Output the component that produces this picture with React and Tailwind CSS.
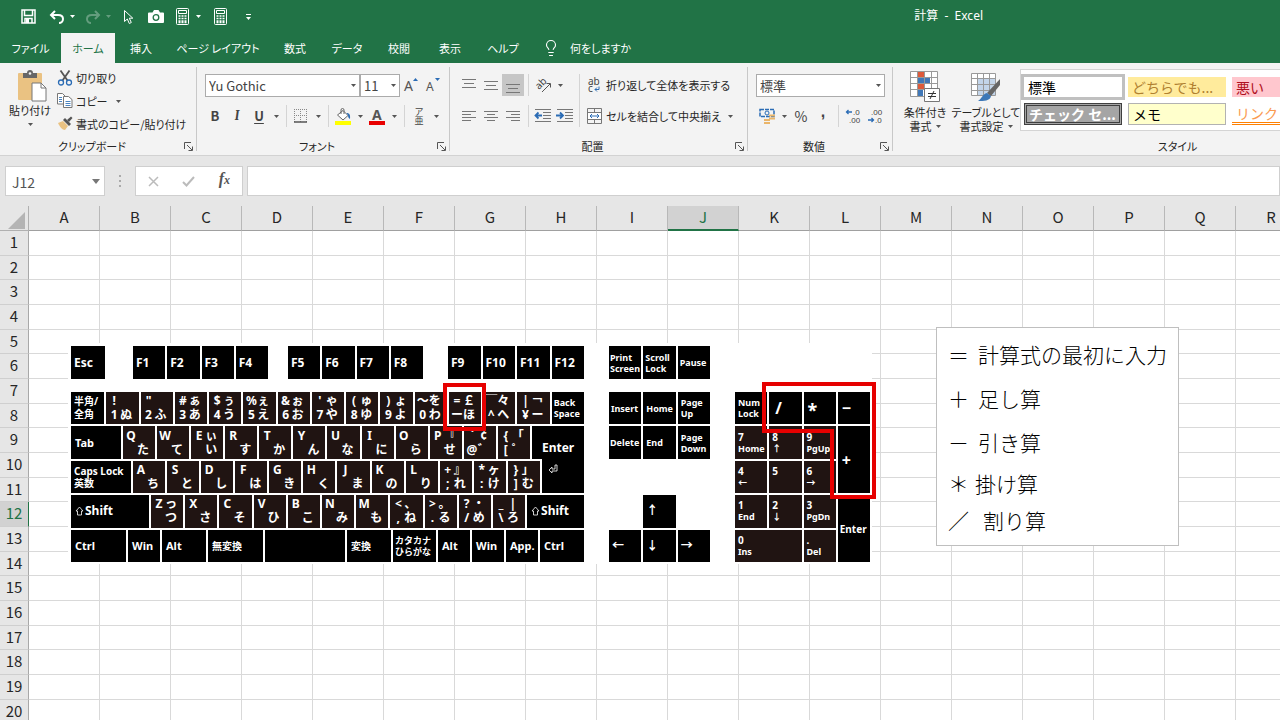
import { Lightbulb } from 'lucide-react'

const columns = 'ABCDEFGHIJKLMNOPQR'.split('')
const rows = Array.from({ length: 20 }, (_, i) => i + 1)

const tabs = [
  { name: 'ファイル', width: 'w-[61px]' },
  { name: 'ホーム', width: 'w-[54px]', active: true },
  { name: '挿入', width: 'w-[52px]' },
  { name: 'ページ レイアウト', width: 'w-[102px]' },
  { name: '数式', width: 'w-[52px]' },
  { name: 'データ', width: 'w-[52px]' },
  { name: '校閲', width: 'w-[52px]' },
  { name: '表示', width: 'w-[50px]' },
  { name: 'ヘルプ', width: 'w-[56px]' },
]

// each key: top left, top right, bottom left, bottom right
const numberKeys = [
  ['!', '', '1', 'ぬ'], ['"', '', '2', 'ふ'], ['#', 'ぁ', '3', 'あ'], ['$', 'ぅ', '4', 'う'],
  ['%', 'ぇ', '5', 'え'], ['&', 'ぉ', '6', 'お'], ["'", 'ゃ', '7', 'や'], ['(', 'ゅ', '8', 'ゆ'],
  [')', 'ょ', '9', 'よ'], ['～', 'を', '0', 'わ'], ['=', '￡', 'ー', 'ほ'], ['￣', '々', '^', 'へ'],
  ['|', '￢', '¥', 'ー'],
]
const topKeys = [
  ['Q', '', '', 'た'], ['W', '', '', 'て'], ['E', 'ぃ', '', 'い'], ['R', '', '', 'す'],
  ['T', '', '', 'か'], ['Y', '', '', 'ん'], ['U', '', '', 'な'], ['I', '', '', 'に'],
  ['O', '', '', 'ら'], ['P', '『', '', 'せ'], ['`', '¢', '@', '゛'], ['{', '「', '[', '゜'],
]
const homeKeys = [
  ['A', '', '', 'ち'], ['S', '', '', 'と'], ['D', '', '', 'し'], ['F', '', '', 'は'],
  ['G', '', '', 'き'], ['H', '', '', 'く'], ['J', '', '', 'ま'], ['K', '', '', 'の'],
  ['L', '', '', 'り'], ['+', '』', ';', 'れ'], ['*', 'ヶ', ':', 'け'], ['}', '」', ']', 'む'],
]
const bottomKeys = [
  ['Z', 'っ', '', 'つ'], ['X', '', '', 'さ'], ['C', '', '', 'そ'], ['V', '', '', 'ひ'],
  ['B', '', '', 'こ'], ['N', '', '', 'み'], ['M', '', '', 'も'], ['<', '、', ',', 'ね'],
  ['>', '。', '.', 'る'], ['?', '・', '/', 'め'], ['_', '|', '\\', 'ろ'],
]

const notes = [
  { sign: '＝', text: '計算式の最初に入力', row: 'h-11', width: 'w-[30px]' },
  { sign: '＋', text: '足し算', row: 'h-11', width: 'w-[30px]' },
  { sign: '－', text: '引き算', row: 'h-11', width: 'w-[30px]' },
  { sign: '＊', text: '掛け算', row: 'h-[38px]', width: 'w-[27px]' },
  { sign: '／', text: '割り算', row: 'h-9', width: 'w-[35px]' },
]

function Caret({ className = 'text-[#555]' }) {
  return (
    <svg width="5" height="3" viewBox="0 0 5 3" className={className}>
      <path d="M0 0h5L2.5 3z" fill="currentColor" />
    </svg>
  )
}

function CaretButton({ label }) {
  return (
    <button aria-label={label} className="flex h-[22px] w-3 shrink-0 items-center justify-center">
      <Caret />
    </button>
  )
}

function Tool({ label, active, children }) {
  return (
    <button
      aria-label={label}
      className={`flex h-[22px] w-[22px] shrink-0 items-center justify-center ${active ? 'bg-[#c6c6c6]' : ''}`}
    >
      {children}
    </button>
  )
}

function Separator() {
  return (
    <div className="flex h-[22px] w-2 shrink-0 justify-center">
      <div className="w-px bg-[#d4d4d4]" />
    </div>
  )
}

function Group({ title, width, launcher = true, children }) {
  return (
    <section className={`flex h-[92px] shrink-0 ${width}`}>
      <div className="flex min-w-0 flex-1 flex-col pt-1 pb-px">
        <div className="h-[71px]">{children}</div>
        <div className="flex h-4 items-center">
          <h2 className="flex-1 text-center text-[11px] leading-4">{title}</h2>
          {launcher && (
            <button aria-label={title} className="mr-[3px] w-[9px]">
              <svg width="9" height="9" viewBox="0 0 9 9" fill="none" stroke="#555">
                <path d="M.5 7V.5H7M3 3l5 5M8.500 4.500v4h-4" />
              </svg>
            </button>
          )}
        </div>
      </div>
      <div className="my-1 w-px bg-[#c8c8c8]" />
    </section>
  )
}

function Combo({ label, value, width }) {
  return (
    <div className={`relative h-[23px] ${width}`}>
      <select
        aria-label={label}
        className="block h-full w-full appearance-none border border-[#ababab] bg-white pl-[3px] text-[13px] leading-5 text-[#444]"
      >
        <option>{value}</option>
      </select>
      <div className="pointer-events-none absolute inset-y-0 right-1 flex items-center">
        <Caret />
      </div>
    </div>
  )
}

function Lines({ shape }) {
  const paths = {
    top: 'M1 2.500h14M3 6.500h10M1 10.500h14',
    middle: 'M1 4.500h14M3 8.500h10M1 12.500h14',
    bottom: 'M1 7.500h14M3 11.500h10M1 15.500h14',
    left: 'M1 3.500h14M1 6.500h9M1 9.500h14M1 12.500h9',
    center: 'M1 3.500h14M4 6.500h8M1 9.500h14M4 12.500h8',
    right: 'M1 3.500h14M6 6.500h9M1 9.500h14M6 12.500h9',
  }
  return (
    <svg width="16" height="17" viewBox="0 0 16 17" stroke="#777">
      <path d={paths[shape]} />
    </svg>
  )
}

function Indent({ right }) {
  return (
    <svg width="18" height="16" viewBox="0 0 18 16" fill="none" stroke="#777">
      <path d="M1 1.500h16M9 4.500h8M9 7.500h8M9 10.500h8M1 13.500h16" />
      <path d={right ? 'M0 7.500h6M4 4.500l3 3-3 3' : 'M2 7.500h6M4.500 4.500l-3 3 3 3'} stroke="#2b6cb5" strokeWidth="1.800" />
    </svg>
  )
}

function Decimals({ increase }) {
  return (
    <svg width="16" height="16" viewBox="0 0 16 16" fill="#444" className="overflow-visible">
      <text x={increase ? 8 : 4} y="7" fontSize="8" fontFamily="Liberation Sans">{increase ? '.0' : '.00'}</text>
      <text x={increase ? 4 : 8} y="15" fontSize="8" fontFamily="Liberation Sans">{increase ? '.00' : '.0'}</text>
      <path
        d={increase ? 'M7 4H1.500M3.500 2l-2 2 2 2' : 'M1 12h5.500M4.500 10l2 2-2 2'}
        fill="none"
        stroke="#2b6cb5"
        strokeWidth="1.300"
      />
    </svg>
  )
}

function Calculator() {
  return (
    <svg width="13" height="17" viewBox="0 0 13 17" fill="none" stroke="#fff">
      <rect x=".5" y=".5" width="12" height="16" rx="1" />
      <path d="M2.500 2.500h8v3h-8z" />
      <path d="M2.500 8h8M2.500 10.500h8M2.500 13h8M2.500 14.500h8" strokeWidth="1.500" strokeDasharray="2 1" />
    </svg>
  )
}

function TitleBar() {
  return (
    <header className="flex h-[33px] shrink-0 items-center text-white">
      <div className="flex items-center pl-5">
        <button aria-label="上書き保存" className="flex w-4 justify-center">
          <svg width="15" height="15" viewBox="0 0 15 15" fill="none" stroke="#fff" strokeWidth="1.500">
            <path d="M1 1h13v13H1zM3.500 1v5.500h8V1M4 14V9.500h7V14" />
            <path d="M5 10h3v4H5z" fill="#fff" stroke="none" />
          </svg>
        </button>
        <button aria-label="元に戻す" className="ml-3 flex w-[18px] justify-center">
          <svg width="16" height="14" viewBox="0 0 16 14" fill="none" stroke="#fff" strokeWidth="2">
            <path d="M6 1L2 5l4 4M2 5h7c3 0 5 1.500 5 4s-2 4-4 4" />
          </svg>
        </button>
        <button aria-label="元に戻す一覧" className="flex w-3 justify-center"><Caret className="text-white" /></button>
        <button aria-label="やり直し" className="ml-[6px] flex w-[18px] justify-center opacity-30">
          <svg width="16" height="14" viewBox="0 0 16 14" fill="none" stroke="#fff" strokeWidth="2">
            <path d="M10 1l4 4-4 4M14 5H7C4 5 2 6.500 2 9s2 4 4 4" />
          </svg>
        </button>
        <button aria-label="やり直し一覧" className="flex w-3 justify-center opacity-30"><Caret className="text-white" /></button>
        <button aria-label="オブジェクトの選択" className="ml-1 flex w-5 justify-center">
          <svg width="11" height="16" viewBox="0 0 11 16" fill="none" stroke="#fff">
            <path d="M1.500 1.500v11l2.800-2.500 2 4.500 2-1-2-4.300h3.500z" />
          </svg>
        </button>
        <button aria-label="カメラ" className="ml-2 flex w-5 justify-center">
          <svg width="16" height="13" viewBox="0 0 16 13">
            <path d="M1 2.500h3.500L6 0h4.500L12 2.500h3a1 1 0 0 1 1 1V12a1 1 0 0 1-1 1H1a1 1 0 0 1-1-1V3.500a1 1 0 0 1 1-1z" fill="#fff" />
            <circle cx="8" cy="7.500" r="2.800" fill="none" stroke="#217346" strokeWidth="1.300" />
          </svg>
        </button>
        <button aria-label="電卓" className="ml-[6px] flex w-5 justify-center"><Calculator /></button>
        <button aria-label="電卓一覧" className="flex w-3 justify-center"><Caret className="text-white" /></button>
        <button aria-label="計算" className="ml-[6px] flex w-5 justify-center"><Calculator /></button>
        <button aria-label="クイック アクセスのカスタマイズ" className="ml-[10px] flex w-4 flex-col items-center gap-[2px]">
          <span className="h-px w-[5px] bg-white" />
          <Caret className="text-white" />
        </button>
      </div>
      <h1 className="ml-auto whitespace-pre pr-[297px] pb-[2px] font-['Noto_Sans','Noto_Sans_CJK_JP',sans-serif] text-xs leading-4">計算  -  Excel</h1>
    </header>
  )
}

function Tabs() {
  return (
    <nav className="flex h-[30px] shrink-0 items-stretch text-[11px] text-white">
      {tabs.map(tab => (
        <button
          key={tab.name}
          className={`shrink-0 whitespace-nowrap ${tab.width} ${tab.active ? 'bg-[#f3f3f3] text-[#217346]' : ''}`}
        >
          {tab.name}
        </button>
      ))}
      <button className="flex shrink-0 items-center gap-[10px] pl-[11px] whitespace-nowrap">
        <Lightbulb size={18} strokeWidth={1.5} />
        何をしますか
      </button>
    </nav>
  )
}

function ClipboardGroup() {
  return (
    <Group title="クリップボード" width="w-[197px]">
      <div className="flex pt-[3px]">
        <button className="flex w-[60px] shrink-0 flex-col items-center text-[11px] leading-4 whitespace-nowrap">
          <svg width="30" height="32" viewBox="0 0 30 32" className="ml-1">
            <rect x="1" y="3" width="24" height="27" rx="1" fill="#eac282" />
            <path d="M6 3h4a3 3 0 0 1 6 0h4v5H6z" fill="#666" />
            <circle cx="13" cy="3.500" r="1.300" fill="#f3f3f3" />
            <path d="M15 13h9l5 5v13H15z" fill="#fff" stroke="#777" />
            <path d="M24 13v5h5" fill="none" stroke="#777" />
          </svg>
          貼り付け
          <span className="flex h-3 items-center"><Caret /></span>
        </button>
        <div className="-ml-[3px] flex flex-col text-[11px] whitespace-nowrap">
          <button className="flex h-[23px] items-start gap-[3px] leading-4">
            <svg width="16" height="16" viewBox="0 0 16 16" fill="none">
              <path d="M3.500.5l7 10M12.500.5l-7 10" stroke="#555" strokeWidth="1.800" />
              <circle cx="4" cy="12.500" r="2.500" stroke="#2b6cb5" strokeWidth="1.300" />
              <circle cx="12" cy="12.500" r="2.500" stroke="#2b6cb5" strokeWidth="1.300" />
            </svg>
            切り取り
          </button>
          <div className="flex h-[23px] items-start gap-[5px]">
            <button className="flex items-start gap-[3px] leading-4">
              <svg width="16" height="15" viewBox="0 0 16 15" fill="#fff" stroke="#777">
                <path d="M.5.5h5l2.500 2.500v8H.5z" />
                <path d="M6.500 3.500h5l3.500 3v8H6.500z" />
                <path d="M2 4.500h3M2 6.500h3M2 8.500h3M8.500 8.500h5M8.500 10.500h5M8.500 12.500h5" stroke="#4a84c0" />
              </svg>
              コピー
            </button>
            <button aria-label="コピー一覧" className="flex h-4 w-3 items-center justify-center"><Caret /></button>
          </div>
          <button className="flex h-[23px] items-start gap-[3px] leading-4">
            <svg width="16" height="15" viewBox="0 0 16 15">
              <path d="M1 7l5-2 5 5-3 4c-3 0-5-3-7-7z" fill="#eac282" />
              <path d="M6 4l2-2 6 6-2 2z" fill="#555" />
              <path d="M10 4l4-3.500L15.500 2 12 6z" fill="#555" />
            </svg>
            書式のコピー/貼り付け
          </button>
        </div>
      </div>
    </Group>
  )
}

function FontGroup() {
  return (
    <Group title="フォント" width="w-[253px]">
      <div className="flex flex-col gap-2 pl-2 pt-[7px]">
        <div className="flex">
          <Combo label="フォント名" value="Yu Gothic" width="w-[155px]" />
          <Combo label="フォント サイズ" value="11" width="w-10" />
          <Tool label="フォント サイズの拡大">
            <svg width="16" height="18" viewBox="0 0 16 18" fill="#555">
              <text x="1" y="15" fontSize="14" fontFamily="Noto Sans">A</text>
              <path d="M10 5l2.500-3L15 5z" fill="#2b6cb5" />
            </svg>
          </Tool>
          <Tool label="フォント サイズの縮小">
            <svg width="16" height="18" viewBox="0 0 16 18" fill="#555">
              <text x="1" y="15" fontSize="12" fontFamily="Noto Sans">A</text>
              <path d="M10 2l2.500 3L15 2z" fill="#2b6cb5" />
            </svg>
          </Tool>
        </div>
        <div className="-ml-px flex text-[13px] leading-4 text-[#444]">
          <Tool label="太字"><b>B</b></Tool>
          <Tool label="斜体"><i className="font-serif font-bold">I</i></Tool>
          <Tool label="下線"><b className="underline underline-offset-2">U</b></Tool>
          <CaretButton label="下線の種類" />
          <Separator />
          <Tool label="罫線">
            <svg width="14" height="14" viewBox="0 0 14 14" fill="none" stroke="#888">
              <path d="M.5 0v13M6.500 0v13M12.500 0v13M0 .5h13M0 6.500h13" strokeDasharray="1 1" />
              <path d="M0 13h13" stroke="#555" strokeWidth="1.500" />
            </svg>
          </Tool>
          <CaretButton label="罫線の種類" />
          <Separator />
          <Tool label="塗りつぶしの色">
            <svg width="17" height="17" viewBox="0 0 17 17" fill="none">
              <path d="M2.500 7L8 2.500l5 5L8 12z" fill="#fff" stroke="#666" />
              <path d="M6 6V2a1.500 1.500 0 0 1 3 0v4" stroke="#666" />
              <path d="M11.500 5c3 0 4 2 3.500 6-1.500-1-2-2-2-4z" fill="#2b6cb5" />
              <path d="M0 13h16v4H0z" fill="#ff0" />
            </svg>
          </Tool>
          <CaretButton label="塗りつぶしの色一覧" />
          <Tool label="フォントの色">
            <svg width="17" height="17" viewBox="0 0 17 17" className="overflow-visible">
              <text x="3" y="12" fontSize="14" fontWeight="bold" fill="#555" fontFamily="Noto Sans">A</text>
              <path d="M0 13h16v4H0z" fill="#e80000" />
            </svg>
          </Tool>
          <CaretButton label="フォントの色一覧" />
          <Separator />
          <Tool label="ふりがな">
            <span className="flex flex-col items-center text-[9px] leading-[9px]">
              <span>ア</span>
              <span>亜</span>
            </span>
          </Tool>
          <CaretButton label="ふりがなの設定" />
        </div>
      </div>
    </Group>
  )
}

function AlignmentGroup() {
  return (
    <Group title="配置" width="w-[298px]">
      <div className="flex pl-2 pt-[7px]">
        <div className="flex flex-col gap-[9px]">
          <div className="flex">
            <Tool label="上揃え"><Lines shape="top" /></Tool>
            <Tool label="上下中央揃え"><Lines shape="middle" /></Tool>
            <Tool label="下揃え" active><Lines shape="bottom" /></Tool>
            <Separator />
            <Tool label="方向">
              <svg width="18" height="17" viewBox="0 0 18 17" fill="none" stroke="#555" className="overflow-visible">
                <text fontSize="10" fill="#444" stroke="none" transform="translate(5 13) rotate(-45)" fontFamily="Noto Sans">ab</text>
                <path d="M8 15l8-8M12.500 6.500h4v4" />
              </svg>
            </Tool>
            <CaretButton label="方向一覧" />
          </div>
          <div className="flex">
            <Tool label="左揃え"><Lines shape="left" /></Tool>
            <Tool label="中央揃え"><Lines shape="center" /></Tool>
            <Tool label="右揃え"><Lines shape="right" /></Tool>
            <Separator />
            <Tool label="インデントを減らす"><Indent /></Tool>
            <Tool label="インデントを増やす"><Indent right /></Tool>
          </div>
        </div>
        <div className="ml-[3px] w-px bg-[#d4d4d4]" />
        <div className="flex flex-col gap-[9px] pl-[7px] text-[11px] leading-4 whitespace-nowrap">
          <button className="flex h-[22px] items-center gap-1">
            <svg width="15" height="16" viewBox="0 0 15 16" fill="none" className="overflow-visible">
              <text x="1" y="8" fontSize="10" fill="#444" fontFamily="Noto Sans">ab</text>
              <text x="1" y="15" fontSize="10" fill="#444" fontFamily="Noto Sans">c</text>
              <path d="M12 9.500v3H8M10 10.500l-2 2 2 2" stroke="#2b6cb5" />
            </svg>
            折り返して全体を表示する
          </button>
          <div className="flex items-center gap-1">
            <button className="flex h-[22px] items-center gap-1">
              <svg width="15" height="16" viewBox="0 0 15 16" fill="none" stroke="#777">
                <path d="M.5.5h14v15H.5zM.5 4.500h14M.5 11.500h14M7.500.5v4M7.500 11.500v4" />
                <path d="M1 5h13v6H1z" fill="#fff" stroke="none" />
                <path d="M3 8h9M5 6L3 8l2 2M10 6l2 2-2 2" stroke="#2b6cb5" />
              </svg>
              セルを結合して中央揃え
            </button>
            <CaretButton label="セルの結合一覧" />
          </div>
        </div>
      </div>
    </Group>
  )
}

function NumberGroup() {
  return (
    <Group title="数値" width="w-[145px]">
      <div className="flex flex-col gap-2 pl-2 pt-[7px]">
        <Combo label="表示形式" value="標準" width="w-[129px]" />
        <div className="flex text-[#444]">
          <Tool label="通貨表示形式">
            <svg width="17" height="16" viewBox="0 0 17 16" fill="none">
              <path d="M1 1.500h14v7H1z" stroke="#2b6cb5" strokeDasharray="4 1" strokeWidth="1.500" />
              <circle cx="8" cy="5" r="2" stroke="#2b6cb5" />
              <path d="M10 7.500h6M10 10.500h6M5 12h6M5 15h6" stroke="#eab56a" strokeWidth="2" />
            </svg>
          </Tool>
          <CaretButton label="通貨一覧" />
          <Tool label="パーセント スタイル"><span className="text-sm leading-4">%</span></Tool>
          <Tool label="桁区切りスタイル"><b className="pb-2 font-['Liberation_Sans',sans-serif] text-base leading-4">,</b></Tool>
          <Separator />
          <Tool label="小数点以下の表示桁数を増やす"><Decimals increase /></Tool>
          <Tool label="小数点以下の表示桁数を減らす"><Decimals /></Tool>
        </div>
      </div>
    </Group>
  )
}

function StyleGroup() {
  return (
    <Group title="スタイル" width="w-[570px]" launcher={false}>
      <div className="flex pl-1 text-[11px] whitespace-nowrap">
        <button className="flex w-14 flex-col items-center pt-1 leading-[14px]">
          <svg width="30" height="32" viewBox="0 0 30 32" fill="none" stroke="#999">
            <path d="M.5.500h27v25H.5z" fill="#fff" />
            <path d="M8 1h7v5H8zM8 13h7v6H8z" fill="#dd5a3a" stroke="none" />
            <path d="M8 7h12v5H8zM8 19h5v6H8z" fill="#4078b8" stroke="none" />
            <path d="M.5 6.500h27M.5 12.500h27M.5 18.500h27M7.500.5v25M14.500.5v25M21.500.5v25" />
            <path d="M14.500 17.500h15v13h-15z" fill="#fff" stroke="#777" />
            <path d="M18 22.500h8M18 25.500h8M24 20l-4 8" stroke="#333" />
          </svg>
          <span className="pt-[2px]">条件付き</span>
          <span className="flex items-center gap-1">書式 <Caret /></span>
        </button>
        <button className="flex w-[66px] flex-col items-center pt-1 leading-[14px]">
          <svg width="30" height="32" viewBox="0 0 30 32" fill="none" stroke="#999">
            <path d="M.5 2.500h24v22H.5z" fill="#fff" />
            <path d="M7 8h17v16H7z" fill="#c3d5ea" stroke="none" />
            <path d="M.5 7.500h24M.5 13.500h24M.5 19.500h24M6.500 2.500v22M12.500 2.500v22M18.500 2.500v22" />
            <path d="M29 8v6l-9 11-4-3z" fill="#666" stroke="none" />
            <path d="M16 22l4 3c-1 5-7 5-13 5 4-2 4-7 9-8z" fill="#3c78b8" stroke="none" />
          </svg>
          <span className="pt-[2px]">テーブルとして</span>
          <span className="flex items-center gap-1">書式設定 <Caret /></span>
        </button>
        <div className="mt-[2px] ml-px grid h-[62px] grid-cols-[98px_98px_98px_98px] content-start gap-[6px] border border-[#d4d4d4] bg-white pt-[7px] pr-1 pl-[3px] text-sm [font-feature-settings:normal]">
          <button className="h-5 bg-white pl-1 text-left leading-4 text-black outline-3 outline-[#c0c0c0]">標準</button>
          <button className="h-5 bg-[#ffeb9c] pl-1 text-left leading-4 text-[#b08030]">どちらでも...</button>
          <button className="h-5 bg-[#ffc7ce] pl-1 text-left leading-4 text-[#b01020]">悪い</button>
          <button className="h-5 bg-[#c6efce] pl-1 text-left leading-4 text-[#006100]">良い</button>
          <button className="h-[22px] border-3 border-double border-[#3f3f3f] bg-[#a5a5a5] pl-[2px] text-left leading-4 font-bold text-white">チェック セ...</button>
          <button className="h-[22px] border border-[#b2b2b2] bg-[#ffffcc] pl-1 text-left leading-4 text-black">メモ</button>
          <button className="h-[22px] border-b-3 border-double border-[#ff8001] pl-1 text-left leading-4 text-[#fa9a50]">リンク セル</button>
        </div>
      </div>
    </Group>
  )
}

function FormulaBar() {
  return (
    <div className="flex shrink-0 bg-[#e6e6e6] pt-[10px] pb-[10px] pl-[5px]">
      <div className="relative h-[30px] w-[100px]">
        <input
          aria-label="名前ボックス"
          defaultValue="J12"
          className="block h-full w-full border border-[#cfcfcf] bg-white pt-[2px] pl-[6px] text-sm leading-5 text-[#555]"
        />
        <button aria-label="名前一覧" className="absolute inset-y-0 right-[5px] flex items-center">
          <svg width="8" height="5" viewBox="0 0 8 5"><path d="M0 0h8L4 5z" fill="#777" /></svg>
        </button>
      </div>
      <div className="flex w-[30px] flex-col items-center justify-center gap-[3px]">
        <span className="h-[2px] w-[2px] bg-[#aaa]" />
        <span className="h-[2px] w-[2px] bg-[#aaa]" />
        <span className="h-[2px] w-[2px] bg-[#aaa]" />
      </div>
      <div className="flex h-[30px] w-[108px] items-center border border-[#cfcfcf] bg-white">
        <button aria-label="キャンセル" className="flex flex-1 justify-center">
          <svg width="11" height="11" viewBox="0 0 11 11" stroke="#bbb" strokeWidth="1.500"><path d="M1 1l9 9M10 1l-9 9" /></svg>
        </button>
        <button aria-label="入力" className="flex flex-1 justify-center">
          <svg width="13" height="11" viewBox="0 0 13 11" fill="none" stroke="#bbb" strokeWidth="2"><path d="M1 6l3.500 3.500L12 1" /></svg>
        </button>
        <button aria-label="関数の挿入" className="flex-1 pb-1 font-['Liberation_Serif',serif] text-base leading-5 font-bold text-[#555] italic">
          f<span className="text-xs">x</span>
        </button>
      </div>
      <input aria-label="数式バー" className="ml-1 h-[30px] min-w-0 flex-1 border border-[#cfcfcf] bg-white px-2 text-sm" />
    </div>
  )
}

function Grid() {
  return (
    <table className="w-[1307px] table-fixed border-separate border-spacing-0 text-[15px] leading-5 text-[#262626]">
      <thead>
        <tr className="h-[25px]">
          <th aria-label="すべて選択" className="w-[29px] border-r border-b border-[#b0b0b0] bg-[#e6e6e6] p-0">
            <svg width="17" height="17" viewBox="0 0 17 17" className="mt-1 ml-2"><path d="M17 0v17H0z" fill="#b4b4b4" /></svg>
          </th>
          {columns.map(col => (
            <th
              key={col}
              className={`w-[71px] border-r p-0 pb-[2px] font-normal ${
                col === 'J'
                  ? 'border-b-2 border-[#b8b8b8] border-b-[#217346] bg-[#d2d2d2] text-[#217346]'
                  : 'border-b border-[#b8b8b8] border-b-[#a0a0a0] bg-[#e6e6e6]'
              }`}
            >
              {col}
            </th>
          ))}
        </tr>
      </thead>
      <tbody>
        {rows.map(row => (
          <tr key={row} className={row % 3 === 2 ? 'h-6' : 'h-[25px]'}>
            <th
              className={`border-r border-b border-b-[#cfcfcf] p-0 pb-[2px] font-normal ${
                row === 12 ? 'border-r-[#217346] bg-[#d2d2d2] text-[#217346]' : 'border-r-[#a8a8a8] bg-[#e6e6e6]'
              }`}
            >
              {row}
            </th>
            {columns.map(col => (
              <td key={col} className="border-r border-b border-[#d9d9d9] bg-white p-0" />
            ))}
          </tr>
        ))}
      </tbody>
    </table>
  )
}

function Key({ className = 'pl-1', size = 'text-xs leading-[14px]', children }) {
  return (
    <div className={`flex min-w-0 flex-col justify-center bg-black whitespace-nowrap ${size} ${className}`}>
      {children}
    </div>
  )
}

function KanaKey({ chars }) {
  return (
    <div className="grid min-w-0 flex-1 grid-cols-[12px_12px] content-center bg-[#201412] pl-[2px] text-xs leading-[14px]">
      {chars.map((char, i) => (
        <span key={i} className="flex h-[14px] justify-center">{char}</span>
      ))}
    </div>
  )
}

function PadKey({ top, bottom, className = '' }) {
  return (
    <div className={`flex min-w-0 flex-col justify-center bg-[#201412] pl-[3px] text-[9px] leading-[11px] whitespace-nowrap ${className}`}>
      <span className="text-[10px]">{top}</span>
      <span className="h-[11px]">{bottom}</span>
    </div>
  )
}

function FunctionKeys({ names, width, className = '' }) {
  return (
    <div className={`flex gap-[2px] ${width} ${className}`}>
      {names.map(name => (
        <Key key={name} className="flex-1 pl-[3px]">{name}</Key>
      ))}
    </div>
  )
}

const small = 'text-[9px] leading-[11px]'
const medium = 'text-[11px] leading-[14px]'

function UpArrow() {
  return (
    <svg width="9" height="10" viewBox="0 0 9 10" fill="none" stroke="#fff" strokeWidth=".8">
      <path d="M4.500 1L8 5H6.500v4h-4V5H1z" />
    </svg>
  )
}

function MainKeys() {
  return (
    <div className="flex w-[513px] flex-col gap-[13px]">
      <div className="flex h-[33px]">
        <Key className="mr-7 w-[34px] pl-[3px]">Esc</Key>
        <FunctionKeys names={['F1', 'F2', 'F3', 'F4']} width="w-[135px]" />
        <FunctionKeys names={['F5', 'F6', 'F7', 'F8']} width="w-[135px]" className="ml-5" />
        <FunctionKeys names={['F9', 'F10', 'F11', 'F12']} width="w-[136px]" className="ml-auto" />
      </div>
      <div className="grid h-[170px] grid-rows-5 gap-[2px]">
        <div className="flex gap-[2px]">
          <Key className="flex-1 pl-[3px]" size="text-[10px] leading-[13px]">
            <span>半角/</span>
            <span>全角</span>
          </Key>
          {numberKeys.map((chars, i) => <KanaKey key={i} chars={chars} />)}
          <Key className="flex-1 pl-[2px]" size={small}>
            <span>Back</span>
            <span>Space</span>
          </Key>
        </div>
        <div className="flex gap-[2px]">
          <Key className="w-[50px] pl-1" size={medium}>Tab</Key>
          {topKeys.map((chars, i) => <KanaKey key={i} chars={chars} />)}
          <Key className="w-[52px] justify-end pb-1 pl-[10px]">Enter</Key>
        </div>
        <div className="flex gap-[2px]">
          <Key className="w-[60px] pl-[3px]" size="text-[10px] leading-[12px]">
            <span>Caps Lock</span>
            <span>英数</span>
          </Key>
          {homeKeys.map((chars, i) => <KanaKey key={i} chars={chars} />)}
          <Key className="-mt-[3px] w-[42px] justify-start pl-[6px]">
            <svg width="10" height="10" viewBox="0 0 10 10" fill="none" stroke="#fff" strokeWidth=".8" className="mt-[6px]">
              <path d="M7 1h2v6H4v2L1 6l3-3v2h3z" />
            </svg>
          </Key>
        </div>
        <div className="flex gap-[2px]">
          <Key className="w-[78px] pl-1">
            <span className="flex items-center gap-px"><UpArrow />Shift</span>
          </Key>
          {bottomKeys.map((chars, i) => <KanaKey key={i} chars={chars} />)}
          <Key className="w-[57px] pl-1">
            <span className="flex items-center gap-px"><UpArrow />Shift</span>
          </Key>
        </div>
        <div className="flex gap-[2px]">
          <Key className="w-[55px] pl-1" size={medium}>Ctrl</Key>
          <Key className="w-8 pl-1" size={medium}>Win</Key>
          <Key className="w-11 pl-1" size={medium}>Alt</Key>
          <Key className="w-[55px] pl-1" size="text-[10px] leading-[14px]">無変換</Key>
          <Key className="flex-1" />
          <Key className="w-11 pl-1" size="text-[10px] leading-[14px]">変換</Key>
          <Key className="w-[43px] pl-[2px]" size={small}>
            <span>カタカナ</span>
            <span>ひらがな</span>
          </Key>
          <Key className="w-8 pl-1" size={medium}>Alt</Key>
          <Key className="w-8 pl-1" size={medium}>Win</Key>
          <Key className="w-8 pl-1" size={medium}>App.</Key>
          <Key className="w-11 pl-1" size={medium}>Ctrl</Key>
        </div>
      </div>
    </div>
  )
}

function NavKeys() {
  return (
    <div className="flex w-[101px] flex-col gap-[13px]">
      <div className="grid h-[33px] grid-cols-3 gap-[2px]">
        <Key className="pl-px" size={small}>
          <span>Print</span>
          <span>Screen</span>
        </Key>
        <Key className="pl-[2px]" size={small}>
          <span>Scroll</span>
          <span>Lock</span>
        </Key>
        <Key className="pl-[2px]" size={small}>Pause</Key>
      </div>
      <div className="grid h-[170px] grid-cols-3 grid-rows-5 gap-[2px]">
        <Key className="pl-[2px]" size={small}>Insert</Key>
        <Key className="pl-[3px]" size={small}>Home</Key>
        <Key className="pl-[3px]" size={small}>
          <span>Page</span>
          <span>Up</span>
        </Key>
        <Key className="pl-px" size={small}>Delete</Key>
        <Key className="pl-[3px]" size={small}>End</Key>
        <Key className="pl-[3px]" size={small}>
          <span>Page</span>
          <span>Down</span>
        </Key>
        <Key className="col-start-2 row-start-4 pl-[3px]">↑</Key>
        <Key className="col-start-1 row-start-5 pl-[3px]">←</Key>
        <Key className="row-start-5 pl-[3px]">↓</Key>
        <Key className="row-start-5 pl-[3px]">→</Key>
      </div>
    </div>
  )
}

function NumberPad() {
  return (
    <div className="mt-[46px] grid h-[170px] w-[135px] grid-cols-4 grid-rows-5 gap-[2px]">
      <Key className="pl-[3px]" size={small}>
        <span>Num</span>
        <span>Lock</span>
      </Key>
      <Key className="pl-[6px]" size="text-base leading-5">/</Key>
      <Key className="pl-1" size="text-lg leading-5"><span className="pt-1">*</span></Key>
      <Key className="pl-1" size="text-base leading-5">−</Key>
      <PadKey top="7" bottom="Home" />
      <PadKey top="8" bottom="↑" />
      <PadKey top="9" bottom="PgUp" />
      <Key className="row-span-2 pl-1" size="text-base leading-5">+</Key>
      <PadKey top="4" bottom="←" />
      <PadKey top="5" bottom="" />
      <PadKey top="6" bottom="→" />
      <PadKey top="1" bottom="End" />
      <PadKey top="2" bottom="↓" />
      <PadKey top="3" bottom="PgDn" />
      <Key className="row-span-2 pl-[2px]" size="text-[10px] leading-[12px]">Enter</Key>
      <PadKey top="0" bottom="Ins" className="col-span-2" />
      <PadKey top="." bottom="Del" />
    </div>
  )
}

// objects floating above the cells
function Keyboard() {
  return (
    <div className="absolute top-[137px] left-[68px] flex gap-[25px] bg-white pt-[3px] pr-[2px] pb-[2px] pl-[3px] font-['Noto_Sans','Noto_Sans_CJK_JP',sans-serif] font-bold text-white">
      <MainKeys />
      <NavKeys />
      <NumberPad />
      <div className="absolute top-10 left-[375px] h-[48px] w-[43px] border-4 border-[#e60000]" />
      <svg width="114" height="118" viewBox="0 0 114 118" fill="none" className="absolute top-[39px] left-[694px]">
        <path d="M2 2h110v113H70V49H2z" stroke="#e60000" strokeWidth="4" />
      </svg>
    </div>
  )
}

function Notes() {
  return (
    <div className="absolute top-[121px] left-[936px] w-[243px] border border-[#bfbfbf] bg-white pt-1 pb-[7px] pl-[11px] font-['Noto_Sans_CJK_JP',sans-serif] text-[21px] leading-6 font-light text-black">
      {notes.map(note => (
        <p key={note.text} className={`flex items-center whitespace-nowrap ${note.row}`}>
          <span className={note.width}>{note.sign}</span>
          <span>{note.text}</span>
        </p>
      ))}
    </div>
  )
}

function App() {
  return (
    <div className="flex h-screen flex-col overflow-hidden bg-white font-['Noto_Sans_CJK_JP',sans-serif] text-[#262626]">
      <div className="flex shrink-0 flex-col bg-[#217346] [font-feature-settings:'palt']">
        <TitleBar />
        <Tabs />
      </div>
      <div className="flex h-[93px] shrink-0 overflow-hidden border-b border-[#d2d2d2] bg-[#f3f3f3] [font-feature-settings:'palt']">
        <ClipboardGroup />
        <FontGroup />
        <AlignmentGroup />
        <NumberGroup />
        <StyleGroup />
      </div>
      <FormulaBar />
      <main className="relative flex-1 overflow-hidden">
        <Grid />
        <Keyboard />
        <Notes />
      </main>
    </div>
  )
}

export default App
